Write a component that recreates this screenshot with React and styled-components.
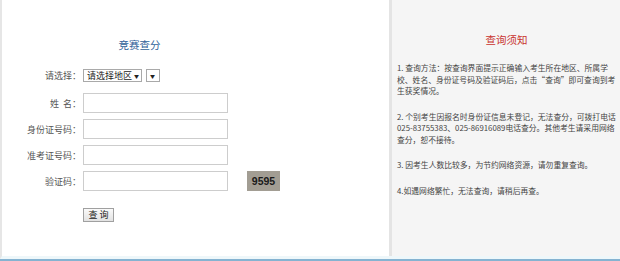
import React from 'react';
import styled, { createGlobalStyle } from 'styled-components';

const GlobalStyle = createGlobalStyle`
    html, body {
        margin: 0;
        padding: 0;
        background: #ffffff;
    }
    body {
        font-family: "Noto Sans CJK SC", "Liberation Sans", sans-serif;
        color: #444;
    }
`;

const Page = styled.div`
    display: flex;
    flex-direction: column;
    width: 620px;
    height: 261px;
`;

const Main = styled.div`
    display: flex;
    flex: 1;
    border-left: 2px solid #e6e6e6;
    border-bottom: 3px solid #eef7fa;
`;

const Footer = styled.div`
    height: 2px;
    background: #85b3d1;
`;

const QueryPanel = styled.div`
    width: 387px;
    padding-top: 38px;
    background: #fff;
    border-right: 3px solid #e4e4e4;
`;

const Form = styled.div`
    width: 275px;
`;

const FormTitle = styled.h2`
    margin: 0 0 17px;
    font-size: 10.5px;
    line-height: 14px;
    font-weight: normal;
    color: #2f6199;
    text-align: center;
`;

const Row = styled.div`
    display: grid;
    grid-template-columns: 79px auto;
    column-gap: 2px;
    align-items: center;
    margin-bottom: ${({ gap }) => gap}px;
`;

const Label = styled.label`
    font-size: 9px;
    color: #555;
    text-align: right;
    white-space: pre;
`;

const Controls = styled.div`
    display: flex;
    align-items: center;
    gap: ${({ gap }) => gap || 0}px;
`;

const Select = styled.div`
    display: flex;
    align-items: center;
    justify-content: space-between;
    box-sizing: border-box;
    width: ${({ width }) => width}px;
    height: 13px;
    padding: 0 2px 0 3px;
    border: 1px solid #a9a9a9;
    background: #fff;
    font-size: 9px;
    line-height: 11px;
    color: #222;
`;

const Arrow = styled.span`
    font-size: 5px;
    color: #222;
`;

const Input = styled.input`
    box-sizing: border-box;
    width: 145px;
    height: 20px;
    margin: 0;
    border: 1px solid #cdcdcd;
    background: #fff;
`;

const Captcha = styled.div`
    display: flex;
    align-items: center;
    justify-content: center;
    width: 33px;
    height: 20px;
    background: #a29d93;
    font-family: "Liberation Sans", sans-serif;
    font-size: 10.5px;
    font-weight: bold;
    color: #1a1a1a;
`;

const Button = styled.button`
    box-sizing: border-box;
    width: 31px;
    height: 14px;
    padding: 0;
    border: 1px solid #a0a0a0;
    background: linear-gradient(#fafafa, #e2e2e2);
    font-family: "Noto Sans CJK SC", sans-serif;
    font-size: 9px;
    line-height: 12px;
    color: #222;
    white-space: pre;
`;

const NoticePanel = styled.div`
    flex: 1;
    padding: 33px 4px 0 5px;
    background: #f5f5f5;
`;

const NoticeTitle = styled.h2`
    margin: 0 0 15px;
    font-size: 10.5px;
    line-height: 14px;
    font-weight: normal;
    color: #c8322d;
    text-align: center;
`;

const Notice = styled.p`
    margin: 0 0 14px;
    font-size: 7.8px;
    line-height: 11.5px;
    color: #444;
`;

const notices = [
    '1. 查询方法：按查询界面提示正确输入考生所在地区、所属学校、姓名、身份证号码及验证码后，点击“查询”即可查询到考生获奖情况。',
    '2. 个别考生因报名时身份证信息未登记，无法查分，可拨打电话025-83755383、025-86916089电话查分。其他考生请采用网络查分，恕不接待。',
    '3. 因考生人数比较多，为节约网络资源，请勿重复查询。',
    '4.如遇网络繁忙，无法查询，请稍后再查。',
];

const App = () => (
    <Page>
        <GlobalStyle />
        <Main>
            <QueryPanel>
                <Form>
                    <FormTitle>竞赛查分</FormTitle>
                    <Row gap={11}>
                        <Label>请选择：</Label>
                        <Controls gap={4}>
                            <Select width={59}>
                                请选择地区 <Arrow>▼</Arrow>
                            </Select>
                            <Select width={14}>
                                <Arrow>▼</Arrow>
                            </Select>
                        </Controls>
                    </Row>
                    <Row gap={6}>
                        <Label>{'姓  名：'}</Label>
                        <Controls>
                            <Input />
                        </Controls>
                    </Row>
                    <Row gap={6}>
                        <Label>身份证号码：</Label>
                        <Controls>
                            <Input />
                        </Controls>
                    </Row>
                    <Row gap={6}>
                        <Label>准考证号码：</Label>
                        <Controls>
                            <Input />
                        </Controls>
                    </Row>
                    <Row gap={17}>
                        <Label>验证码：</Label>
                        <Controls gap={19}>
                            <Input />
                            <Captcha>9595</Captcha>
                        </Controls>
                    </Row>
                    <Row gap={0}>
                        <span />
                        <Controls>
                            <Button>{'查 询'}</Button>
                        </Controls>
                    </Row>
                </Form>
            </QueryPanel>
            <NoticePanel>
                <NoticeTitle>查询须知</NoticeTitle>
                {notices.map(text => (
                    <Notice key={text}>{text}</Notice>
                ))}
            </NoticePanel>
        </Main>
        <Footer />
    </Page>
);

export default App;
